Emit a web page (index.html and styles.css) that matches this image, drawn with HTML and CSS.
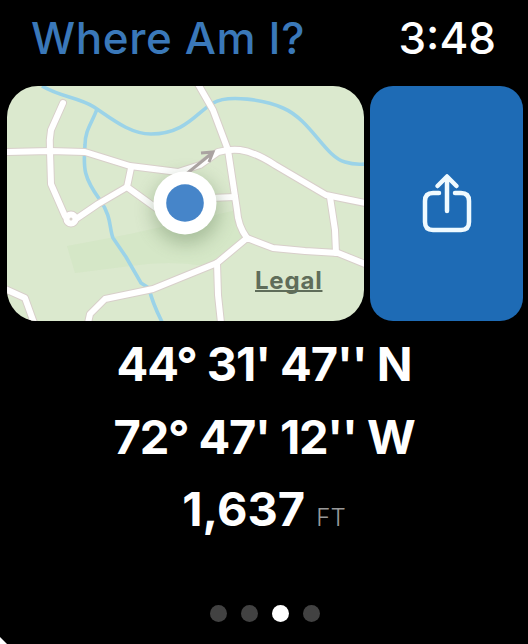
FILE: index.html
```html
<!DOCTYPE html>
<html lang="en">
<head>
<meta charset="UTF-8">
<meta name="viewport" content="width=device-width, initial-scale=1.0">
<title>Where Am I?</title>
<link rel="stylesheet" href="styles.css">
</head>
<body>
<div class="watch">
<header>
<h1>Where Am I?</h1>
<span class="time">3:48</span>
</header>
<div class="tiles">
<div class="map">
<svg viewBox="7 86 358 235" width="358" height="235">
<defs>
<filter id="soft" x="-50%" y="-50%" width="200%" height="200%"><feGaussianBlur stdDeviation="9"/></filter>
<g id="roads">
<path d="M63 103L51 130Q49 140 50 151L51 184L65 216"/>
<path d="M7 152L50 151L85 152L130 166L178 172L200 165L218 152Q229 149 240 150Q255 152 275 165L326 195L365 203"/>
<path d="M198 84L213 110L228 150L237 210Q238 226 247 238"/>
<path d="M131 168L127 187L156 208"/>
<path d="M76 219L98 204L127 187"/>
<path d="M210 198L235 197"/>
<path d="M330 197L335 230L336 253"/>
<path d="M88 323L90 314L105 299L153 289L180 278L217 263L247 238L273 248L305 251L338 253L365 264"/>
<path d="M217 263L218 295L221 323"/>
<path d="M5 289L25 298L34 323"/>
<circle cx="71" cy="219" r="4.5"/>
</g>
</defs>
<rect x="7" y="86" width="358" height="235" fill="#dbe9ce"/>
<path d="M67 246Q100 240 130 234L237 210L244 238L205 266Q170 260 130 266L75 273Z" fill="#cfe5c0" opacity=".5"/>
<g class="river">
<path d="M42 86C60 97 78 97 94 107C112 119 130 134 151 134C185 134 196 113 213 103C228 94 266 100 283 108C311 120 325 157 345 162Q354 165 365 164"/>
<path d="M97 109C92 123 85 130 85 145C83 169 84 178 100 200C112 217 109 228 113 238L126 257L141 283L149 288Q152 302 162 322"/>
</g>
<use href="#roads" class="road-edge"/>
<use href="#roads" class="road"/>
<circle cx="186" cy="210" r="34" fill="#65805a" opacity=".4" filter="url(#soft)"/>
<path d="M185 175L211 154M201 153L213 152L209 162" class="heading"/>
<circle cx="185" cy="203" r="31.5" fill="#fff"/>
<circle cx="185" cy="203" r="18.8" fill="#4685c9"/>
</svg>
<a class="legal">Legal</a>
</div>
<div class="share">
<svg viewBox="0 0 52 62" width="52" height="62">
<path d="M18 20H12Q4 20 4 28V49Q4 57 12 57H40Q48 57 48 49V28Q48 20 40 20H34"/>
<path d="M26 38V4M16.500 13L26 3.500L35.500 13"/>
</svg>
</div>
</div>
<main>
<p class="lat">44° 31' 47'' N</p>
<p class="lon">72° 47' 12'' W</p>
<p class="alt">1,637 <span>FT</span></p>
</main>
<div class="dots">
<i></i><i></i><i class="on"></i><i></i>
</div>
<div class="corner"></div>
</div>
</body>
</html>
```

FILE: styles.css
```css
body {
margin: 0;
background: #000;
color: #fff;
font-family: Inter, "Liberation Sans", sans-serif;
}
.watch {
position: relative;
height: 644px;
overflow: hidden;
display: flex;
flex-direction: column;
}
header {
height: 86px;
box-sizing: border-box;
padding: 10px 32px 0 31px;
display: flex;
justify-content: space-between;
line-height: 56px;
}
h1 {
margin: 0;
font-size: 44px;
font-weight: 500;
letter-spacing: 0.6px;
color: #3a78b9;
white-space: nowrap;
}
.time {
font-size: 44px;
font-weight: 550;
}
.tiles {
display: flex;
gap: 6px;
padding-left: 7px;
}
.map {
position: relative;
width: 357px;
height: 235px;
border-radius: 31px;
overflow: hidden;
}
.map svg {
display: block;
}
.river path {
fill: none;
stroke: #9bd3e8;
stroke-width: 3.6;
}
.road-edge {
fill: none;
stroke: #d8cfca;
stroke-width: 8;
stroke-linejoin: round;
stroke-linecap: round;
}
.road {
fill: none;
stroke: #fff;
stroke-width: 6;
stroke-linejoin: round;
stroke-linecap: round;
}
.heading {
fill: none;
stroke: #aaa3a1;
stroke-width: 3;
}
.legal {
position: absolute;
left: 248px;
top: 180px;
font-size: 24px;
line-height: 30px;
font-weight: 700;
letter-spacing: 0.8px;
color: #5f6d5a;
text-decoration: underline;
text-decoration-thickness: 2px;
text-underline-offset: 1px;
text-decoration-skip-ink: none;
}
.share {
width: 153px;
height: 235px;
border-radius: 23px;
background: #1e6bb5;
display: flex;
align-items: center;
justify-content: center;
}
.share svg {
fill: none;
stroke: #effaff;
stroke-width: 4.5;
stroke-linecap: round;
stroke-linejoin: round;
}
main {
padding-top: 7px;
text-align: center;
}
main p {
margin: 0;
height: 72.5px;
line-height: 72.5px;
font-size: 47px;
font-weight: 650;
white-space: pre;
}
.lat {
letter-spacing: -1.1px;
}
.lon {
letter-spacing: -1.3px;
word-spacing: 0.5px;
}
.alt span {
font-size: 24px;
font-weight: 300;
color: #999;
}
.dots {
display: flex;
justify-content: center;
gap: 13.5px;
margin-top: 59px;
padding-left: 2px;
}
.dots i {
width: 17.5px;
height: 17.5px;
border-radius: 50%;
background: #424242;
}
.dots .on {
background: #fff;
}
.corner {
position: absolute;
left: 0;
bottom: 0;
width: 7px;
height: 7px;
background: #fff;
clip-path: polygon(0 0, 100% 100%, 0 100%);
}
```
